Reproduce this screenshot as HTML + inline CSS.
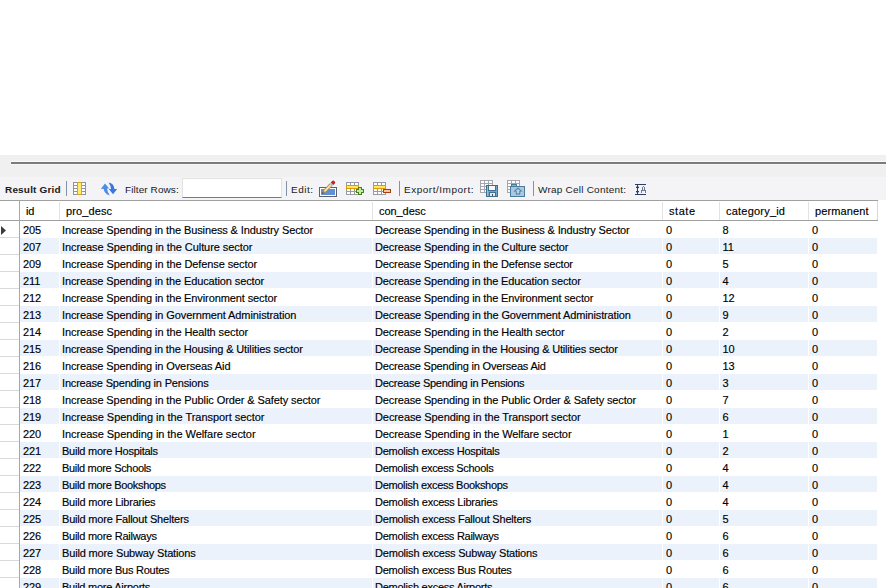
<!DOCTYPE html>
<html><head><meta charset="utf-8"><style>
*{margin:0;padding:0;box-sizing:border-box}
html,body{width:886px;height:588px;overflow:hidden;background:#fff}
body{position:relative;font-family:"Liberation Sans",sans-serif;color:#000}
.a{position:absolute}
.t{position:absolute;white-space:nowrap;font-size:11px;line-height:13px;-webkit-text-stroke:0.15px #000}
.tb{position:absolute;white-space:nowrap;font-size:10px;line-height:12px;color:#1a1a1a;transform:scaleY(0.88);transform-origin:0 10px}
.hl{position:absolute;background:#ebf2fc;height:16px}
.gl{position:absolute;left:0;width:19px;height:1px;background:#d9d9d9}
.sep{position:absolute;width:1px;height:15px;top:181px;background:#8393a6}
svg{position:absolute;shape-rendering:crispEdges}
</style></head><body>

<div class="a" style="left:0;top:155px;width:886px;height:22px;background:#f0f0f0"></div>
<div class="a" style="left:11px;top:161px;width:875px;height:1px;background:#f9f9f9"></div>
<div class="a" style="left:11px;top:162px;width:875px;height:2px;background:#7b7b7b"></div>
<div class="a" style="left:11px;top:164px;width:875px;height:1px;background:#f7f7f7"></div>
<div class="a" style="left:0;top:177px;width:886px;height:23px;background:#f4f4f6"></div>
<div class="a" style="left:0;top:200px;width:878px;height:1px;background:#a0a0a0"></div>
<div class="a" style="left:0;top:201px;width:878px;height:19px;background:#fff"></div>
<div class="a" style="left:0;top:220px;width:878px;height:1px;background:#a0a0a0"></div>
<div class="a" style="left:59px;top:202px;width:1px;height:18px;background:#e3e3e3"></div>
<div class="a" style="left:372px;top:202px;width:1px;height:18px;background:#e3e3e3"></div>
<div class="a" style="left:662px;top:202px;width:1px;height:18px;background:#e3e3e3"></div>
<div class="a" style="left:719px;top:202px;width:1px;height:18px;background:#e3e3e3"></div>
<div class="a" style="left:808px;top:202px;width:1px;height:18px;background:#e3e3e3"></div>
<div class="a" style="left:877px;top:201px;width:1px;height:19px;background:#d8d8d8"></div>
<div class="a" style="left:19px;top:200px;width:1px;height:388px;background:#a8a8a8"></div>
<div class="t" style="left:26px;top:205px;letter-spacing:-0.13px">id</div>
<div class="t" style="left:66px;top:205px;letter-spacing:0.113px">pro_desc</div>
<div class="t" style="left:379px;top:205px;letter-spacing:-0.066px">con_desc</div>
<div class="t" style="left:669px;top:205px;letter-spacing:0.545px">state</div>
<div class="t" style="left:726px;top:205px;letter-spacing:0.212px">category_id</div>
<div class="t" style="left:815px;top:205px;letter-spacing:0.107px">permanent</div>
<div class="gl" style="top:237px"></div>
<div class="t" style="left:23px;top:224px;letter-spacing:-0.13px">205</div>
<div class="t" style="left:62px;top:224px;letter-spacing:-0.113px">Increase Spending in the Business &amp; Industry Sector</div>
<div class="t" style="left:375px;top:224px;letter-spacing:-0.14px">Decrease Spending in the Business &amp; Industry Sector</div>
<div class="t" style="left:666px;top:224px;letter-spacing:-0.13px">0</div>
<div class="t" style="left:722.5px;top:224px;letter-spacing:-0.13px">8</div>
<div class="t" style="left:812px;top:224px;letter-spacing:-0.13px">0</div>
<div class="hl" style="left:20px;top:238px;width:39px"></div>
<div class="hl" style="left:60px;top:238px;width:312px"></div>
<div class="hl" style="left:373px;top:238px;width:289px"></div>
<div class="hl" style="left:663px;top:238px;width:56px"></div>
<div class="hl" style="left:720px;top:238px;width:88px"></div>
<div class="hl" style="left:809px;top:238px;width:68px"></div>
<div class="gl" style="top:254px"></div>
<div class="t" style="left:23px;top:241px;letter-spacing:-0.13px">207</div>
<div class="t" style="left:62px;top:241px;letter-spacing:-0.076px">Increase Spending in the Culture sector</div>
<div class="t" style="left:375px;top:241px;letter-spacing:-0.121px">Decrease Spending in the Culture sector</div>
<div class="t" style="left:666px;top:241px;letter-spacing:-0.13px">0</div>
<div class="t" style="left:722.5px;top:241px;letter-spacing:-0.13px">11</div>
<div class="t" style="left:812px;top:241px;letter-spacing:-0.13px">0</div>
<div class="gl" style="top:271px"></div>
<div class="t" style="left:23px;top:258px;letter-spacing:-0.13px">209</div>
<div class="t" style="left:62px;top:258px;letter-spacing:-0.094px">Increase Spending in the Defense sector</div>
<div class="t" style="left:375px;top:258px;letter-spacing:-0.147px">Decrease Spending in the Defense sector</div>
<div class="t" style="left:666px;top:258px;letter-spacing:-0.13px">0</div>
<div class="t" style="left:722.5px;top:258px;letter-spacing:-0.13px">5</div>
<div class="t" style="left:812px;top:258px;letter-spacing:-0.13px">0</div>
<div class="hl" style="left:20px;top:272px;width:39px"></div>
<div class="hl" style="left:60px;top:272px;width:312px"></div>
<div class="hl" style="left:373px;top:272px;width:289px"></div>
<div class="hl" style="left:663px;top:272px;width:56px"></div>
<div class="hl" style="left:720px;top:272px;width:88px"></div>
<div class="hl" style="left:809px;top:272px;width:68px"></div>
<div class="gl" style="top:288px"></div>
<div class="t" style="left:23px;top:275px;letter-spacing:-0.13px">211</div>
<div class="t" style="left:62px;top:275px;letter-spacing:-0.113px">Increase Spending in the Education sector</div>
<div class="t" style="left:375px;top:275px;letter-spacing:-0.144px">Decrease Spending in the Education sector</div>
<div class="t" style="left:666px;top:275px;letter-spacing:-0.13px">0</div>
<div class="t" style="left:722.5px;top:275px;letter-spacing:-0.13px">4</div>
<div class="t" style="left:812px;top:275px;letter-spacing:-0.13px">0</div>
<div class="gl" style="top:305px"></div>
<div class="t" style="left:23px;top:292px;letter-spacing:-0.13px">212</div>
<div class="t" style="left:62px;top:292px;letter-spacing:-0.106px">Increase Spending in the Environment sector</div>
<div class="t" style="left:375px;top:292px;letter-spacing:-0.141px">Decrease Spending in the Environment sector</div>
<div class="t" style="left:666px;top:292px;letter-spacing:-0.13px">0</div>
<div class="t" style="left:722.5px;top:292px;letter-spacing:-0.13px">12</div>
<div class="t" style="left:812px;top:292px;letter-spacing:-0.13px">0</div>
<div class="hl" style="left:20px;top:306px;width:39px"></div>
<div class="hl" style="left:60px;top:306px;width:312px"></div>
<div class="hl" style="left:373px;top:306px;width:289px"></div>
<div class="hl" style="left:663px;top:306px;width:56px"></div>
<div class="hl" style="left:720px;top:306px;width:88px"></div>
<div class="hl" style="left:809px;top:306px;width:68px"></div>
<div class="gl" style="top:322px"></div>
<div class="t" style="left:23px;top:309px;letter-spacing:-0.13px">213</div>
<div class="t" style="left:62px;top:309px;letter-spacing:-0.102px">Increase Spending in Government Administration</div>
<div class="t" style="left:375px;top:309px;letter-spacing:-0.13px">Decrease Spending in the Government Administration</div>
<div class="t" style="left:666px;top:309px;letter-spacing:-0.13px">0</div>
<div class="t" style="left:722.5px;top:309px;letter-spacing:-0.13px">9</div>
<div class="t" style="left:812px;top:309px;letter-spacing:-0.13px">0</div>
<div class="gl" style="top:339px"></div>
<div class="t" style="left:23px;top:326px;letter-spacing:-0.13px">214</div>
<div class="t" style="left:62px;top:326px;letter-spacing:-0.094px">Increase Spending in the Health sector</div>
<div class="t" style="left:375px;top:326px;letter-spacing:-0.131px">Decrease Spending in the Health sector</div>
<div class="t" style="left:666px;top:326px;letter-spacing:-0.13px">0</div>
<div class="t" style="left:722.5px;top:326px;letter-spacing:-0.13px">2</div>
<div class="t" style="left:812px;top:326px;letter-spacing:-0.13px">0</div>
<div class="hl" style="left:20px;top:340px;width:39px"></div>
<div class="hl" style="left:60px;top:340px;width:312px"></div>
<div class="hl" style="left:373px;top:340px;width:289px"></div>
<div class="hl" style="left:663px;top:340px;width:56px"></div>
<div class="hl" style="left:720px;top:340px;width:88px"></div>
<div class="hl" style="left:809px;top:340px;width:68px"></div>
<div class="gl" style="top:356px"></div>
<div class="t" style="left:23px;top:343px;letter-spacing:-0.13px">215</div>
<div class="t" style="left:62px;top:343px;letter-spacing:-0.122px">Increase Spending in the Housing &amp; Utilities sector</div>
<div class="t" style="left:375px;top:343px;letter-spacing:-0.179px">Decrease Spending in the Housing &amp; Utilities sector</div>
<div class="t" style="left:666px;top:343px;letter-spacing:-0.13px">0</div>
<div class="t" style="left:722.5px;top:343px;letter-spacing:-0.13px">10</div>
<div class="t" style="left:812px;top:343px;letter-spacing:-0.13px">0</div>
<div class="gl" style="top:373px"></div>
<div class="t" style="left:23px;top:360px;letter-spacing:-0.13px">216</div>
<div class="t" style="left:62px;top:360px;letter-spacing:-0.102px">Increase Spending in Overseas Aid</div>
<div class="t" style="left:375px;top:360px;letter-spacing:-0.179px">Decrease Spending in Overseas Aid</div>
<div class="t" style="left:666px;top:360px;letter-spacing:-0.13px">0</div>
<div class="t" style="left:722.5px;top:360px;letter-spacing:-0.13px">13</div>
<div class="t" style="left:812px;top:360px;letter-spacing:-0.13px">0</div>
<div class="hl" style="left:20px;top:374px;width:39px"></div>
<div class="hl" style="left:60px;top:374px;width:312px"></div>
<div class="hl" style="left:373px;top:374px;width:289px"></div>
<div class="hl" style="left:663px;top:374px;width:56px"></div>
<div class="hl" style="left:720px;top:374px;width:88px"></div>
<div class="hl" style="left:809px;top:374px;width:68px"></div>
<div class="gl" style="top:390px"></div>
<div class="t" style="left:23px;top:377px;letter-spacing:-0.13px">217</div>
<div class="t" style="left:62px;top:377px;letter-spacing:-0.178px">Increase Spending in Pensions</div>
<div class="t" style="left:375px;top:377px;letter-spacing:-0.248px">Decrease Spending in Pensions</div>
<div class="t" style="left:666px;top:377px;letter-spacing:-0.13px">0</div>
<div class="t" style="left:722.5px;top:377px;letter-spacing:-0.13px">3</div>
<div class="t" style="left:812px;top:377px;letter-spacing:-0.13px">0</div>
<div class="gl" style="top:407px"></div>
<div class="t" style="left:23px;top:394px;letter-spacing:-0.13px">218</div>
<div class="t" style="left:62px;top:394px;letter-spacing:-0.097px">Increase Spending in the Public Order &amp; Safety sector</div>
<div class="t" style="left:375px;top:394px;letter-spacing:-0.139px">Decrease Spending in the Public Order &amp; Safety sector</div>
<div class="t" style="left:666px;top:394px;letter-spacing:-0.13px">0</div>
<div class="t" style="left:722.5px;top:394px;letter-spacing:-0.13px">7</div>
<div class="t" style="left:812px;top:394px;letter-spacing:-0.13px">0</div>
<div class="hl" style="left:20px;top:408px;width:39px"></div>
<div class="hl" style="left:60px;top:408px;width:312px"></div>
<div class="hl" style="left:373px;top:408px;width:289px"></div>
<div class="hl" style="left:663px;top:408px;width:56px"></div>
<div class="hl" style="left:720px;top:408px;width:88px"></div>
<div class="hl" style="left:809px;top:408px;width:68px"></div>
<div class="gl" style="top:424px"></div>
<div class="t" style="left:23px;top:411px;letter-spacing:-0.13px">219</div>
<div class="t" style="left:62px;top:411px;letter-spacing:-0.043px">Increase Spending in the Transport sector</div>
<div class="t" style="left:375px;top:411px;letter-spacing:-0.088px">Decrease Spending in the Transport sector</div>
<div class="t" style="left:666px;top:411px;letter-spacing:-0.13px">0</div>
<div class="t" style="left:722.5px;top:411px;letter-spacing:-0.13px">6</div>
<div class="t" style="left:812px;top:411px;letter-spacing:-0.13px">0</div>
<div class="gl" style="top:441px"></div>
<div class="t" style="left:23px;top:428px;letter-spacing:-0.13px">220</div>
<div class="t" style="left:62px;top:428px;letter-spacing:-0.05px">Increase Spending in the Welfare sector</div>
<div class="t" style="left:375px;top:428px;letter-spacing:-0.1px">Decrease Spending in the Welfare sector</div>
<div class="t" style="left:666px;top:428px;letter-spacing:-0.13px">0</div>
<div class="t" style="left:722.5px;top:428px;letter-spacing:-0.13px">1</div>
<div class="t" style="left:812px;top:428px;letter-spacing:-0.13px">0</div>
<div class="hl" style="left:20px;top:442px;width:39px"></div>
<div class="hl" style="left:60px;top:442px;width:312px"></div>
<div class="hl" style="left:373px;top:442px;width:289px"></div>
<div class="hl" style="left:663px;top:442px;width:56px"></div>
<div class="hl" style="left:720px;top:442px;width:88px"></div>
<div class="hl" style="left:809px;top:442px;width:68px"></div>
<div class="gl" style="top:458px"></div>
<div class="t" style="left:23px;top:445px;letter-spacing:-0.13px">221</div>
<div class="t" style="left:62px;top:445px;letter-spacing:-0.255px">Build more Hospitals</div>
<div class="t" style="left:375px;top:445px;letter-spacing:-0.279px">Demolish excess Hospitals</div>
<div class="t" style="left:666px;top:445px;letter-spacing:-0.13px">0</div>
<div class="t" style="left:722.5px;top:445px;letter-spacing:-0.13px">2</div>
<div class="t" style="left:812px;top:445px;letter-spacing:-0.13px">0</div>
<div class="gl" style="top:475px"></div>
<div class="t" style="left:23px;top:462px;letter-spacing:-0.13px">222</div>
<div class="t" style="left:62px;top:462px;letter-spacing:-0.318px">Build more Schools</div>
<div class="t" style="left:375px;top:462px;letter-spacing:-0.304px">Demolish excess Schools</div>
<div class="t" style="left:666px;top:462px;letter-spacing:-0.13px">0</div>
<div class="t" style="left:722.5px;top:462px;letter-spacing:-0.13px">4</div>
<div class="t" style="left:812px;top:462px;letter-spacing:-0.13px">0</div>
<div class="hl" style="left:20px;top:476px;width:39px"></div>
<div class="hl" style="left:60px;top:476px;width:312px"></div>
<div class="hl" style="left:373px;top:476px;width:289px"></div>
<div class="hl" style="left:663px;top:476px;width:56px"></div>
<div class="hl" style="left:720px;top:476px;width:88px"></div>
<div class="hl" style="left:809px;top:476px;width:68px"></div>
<div class="gl" style="top:492px"></div>
<div class="t" style="left:23px;top:479px;letter-spacing:-0.13px">223</div>
<div class="t" style="left:62px;top:479px;letter-spacing:-0.315px">Build more Bookshops</div>
<div class="t" style="left:375px;top:479px;letter-spacing:-0.318px">Demolish excess Bookshops</div>
<div class="t" style="left:666px;top:479px;letter-spacing:-0.13px">0</div>
<div class="t" style="left:722.5px;top:479px;letter-spacing:-0.13px">4</div>
<div class="t" style="left:812px;top:479px;letter-spacing:-0.13px">0</div>
<div class="gl" style="top:509px"></div>
<div class="t" style="left:23px;top:496px;letter-spacing:-0.13px">224</div>
<div class="t" style="left:62px;top:496px;letter-spacing:-0.221px">Build more Libraries</div>
<div class="t" style="left:375px;top:496px;letter-spacing:-0.239px">Demolish excess Libraries</div>
<div class="t" style="left:666px;top:496px;letter-spacing:-0.13px">0</div>
<div class="t" style="left:722.5px;top:496px;letter-spacing:-0.13px">4</div>
<div class="t" style="left:812px;top:496px;letter-spacing:-0.13px">0</div>
<div class="hl" style="left:20px;top:510px;width:39px"></div>
<div class="hl" style="left:60px;top:510px;width:312px"></div>
<div class="hl" style="left:373px;top:510px;width:289px"></div>
<div class="hl" style="left:663px;top:510px;width:56px"></div>
<div class="hl" style="left:720px;top:510px;width:88px"></div>
<div class="hl" style="left:809px;top:510px;width:68px"></div>
<div class="gl" style="top:526px"></div>
<div class="t" style="left:23px;top:513px;letter-spacing:-0.13px">225</div>
<div class="t" style="left:62px;top:513px;letter-spacing:-0.199px">Build more Fallout Shelters</div>
<div class="t" style="left:375px;top:513px;letter-spacing:-0.204px">Demolish excess Fallout Shelters</div>
<div class="t" style="left:666px;top:513px;letter-spacing:-0.13px">0</div>
<div class="t" style="left:722.5px;top:513px;letter-spacing:-0.13px">5</div>
<div class="t" style="left:812px;top:513px;letter-spacing:-0.13px">0</div>
<div class="gl" style="top:543px"></div>
<div class="t" style="left:23px;top:530px;letter-spacing:-0.13px">226</div>
<div class="t" style="left:62px;top:530px;letter-spacing:-0.26px">Build more Railways</div>
<div class="t" style="left:375px;top:530px;letter-spacing:-0.27px">Demolish excess Railways</div>
<div class="t" style="left:666px;top:530px;letter-spacing:-0.13px">0</div>
<div class="t" style="left:722.5px;top:530px;letter-spacing:-0.13px">6</div>
<div class="t" style="left:812px;top:530px;letter-spacing:-0.13px">0</div>
<div class="hl" style="left:20px;top:544px;width:39px"></div>
<div class="hl" style="left:60px;top:544px;width:312px"></div>
<div class="hl" style="left:373px;top:544px;width:289px"></div>
<div class="hl" style="left:663px;top:544px;width:56px"></div>
<div class="hl" style="left:720px;top:544px;width:88px"></div>
<div class="hl" style="left:809px;top:544px;width:68px"></div>
<div class="gl" style="top:560px"></div>
<div class="t" style="left:23px;top:547px;letter-spacing:-0.13px">227</div>
<div class="t" style="left:62px;top:547px;letter-spacing:-0.153px">Build more Subway Stations</div>
<div class="t" style="left:375px;top:547px;letter-spacing:-0.19px">Demolish excess Subway Stations</div>
<div class="t" style="left:666px;top:547px;letter-spacing:-0.13px">0</div>
<div class="t" style="left:722.5px;top:547px;letter-spacing:-0.13px">6</div>
<div class="t" style="left:812px;top:547px;letter-spacing:-0.13px">0</div>
<div class="gl" style="top:577px"></div>
<div class="t" style="left:23px;top:564px;letter-spacing:-0.13px">228</div>
<div class="t" style="left:62px;top:564px;letter-spacing:-0.247px">Build more Bus Routes</div>
<div class="t" style="left:375px;top:564px;letter-spacing:-0.248px">Demolish excess Bus Routes</div>
<div class="t" style="left:666px;top:564px;letter-spacing:-0.13px">0</div>
<div class="t" style="left:722.5px;top:564px;letter-spacing:-0.13px">6</div>
<div class="t" style="left:812px;top:564px;letter-spacing:-0.13px">0</div>
<div class="hl" style="left:20px;top:578px;width:39px"></div>
<div class="hl" style="left:60px;top:578px;width:312px"></div>
<div class="hl" style="left:373px;top:578px;width:289px"></div>
<div class="hl" style="left:663px;top:578px;width:56px"></div>
<div class="hl" style="left:720px;top:578px;width:88px"></div>
<div class="hl" style="left:809px;top:578px;width:68px"></div>
<div class="gl" style="top:594px"></div>
<div class="t" style="left:23px;top:581px;letter-spacing:-0.13px">229</div>
<div class="t" style="left:62px;top:581px;letter-spacing:-0.254px">Build more Airports</div>
<div class="t" style="left:375px;top:581px;letter-spacing:-0.259px">Demolish excess Airports</div>
<div class="t" style="left:666px;top:581px;letter-spacing:-0.13px">0</div>
<div class="t" style="left:722.5px;top:581px;letter-spacing:-0.13px">6</div>
<div class="t" style="left:812px;top:581px;letter-spacing:-0.13px">0</div>
<svg style="left:0;top:225px" width="8" height="12" viewBox="0 0 8 12"><path d="M1,1 L6,5.5 L1,10 Z" fill="#3c3c3c" style="shape-rendering:auto"/></svg>
<div class="tb" style="left:5px;top:184px;font-weight:bold;letter-spacing:0.17px">Result Grid</div>
<div class="tb" style="left:125px;top:184px;letter-spacing:0.082px">Filter Rows:</div>
<div class="tb" style="left:291px;top:184px;letter-spacing:0.476px">Edit:</div>
<div class="tb" style="left:404px;top:184px;letter-spacing:0.513px">Export/Import:</div>
<div class="tb" style="left:538px;top:184px;letter-spacing:0.218px">Wrap Cell Content:</div>
<div class="sep" style="left:66px"></div>
<div class="a" style="left:182px;top:178px;width:100px;height:20px;background:#fff;border:1px solid #e2e2e2;border-bottom:1px solid #7a7a7a"></div>
<div class="sep" style="left:286px"></div>
<div class="sep" style="left:399px"></div>
<div class="sep" style="left:533px"></div>
<!-- column icon -->
<svg style="left:73px;top:182px" width="13" height="13" viewBox="0 0 13 13">
<rect x="0" y="0" width="13" height="13" fill="#8f949c"/>
<rect x="1" y="1" width="3" height="2" fill="#fff"/><rect x="1" y="4" width="3" height="2" fill="#fff"/><rect x="1" y="7" width="3" height="2" fill="#fff"/><rect x="1" y="10" width="3" height="2" fill="#fff"/>
<rect x="9" y="1" width="3" height="2" fill="#fff"/><rect x="9" y="4" width="3" height="2" fill="#fff"/><rect x="9" y="7" width="3" height="2" fill="#fff"/><rect x="9" y="10" width="3" height="2" fill="#fff"/>
<rect x="4" y="0" width="5" height="13" fill="#e2a200"/><rect x="5" y="1" width="3" height="11" fill="#ffec6e"/>
</svg>
<!-- refresh -->
<svg style="left:98px;top:179px;shape-rendering:auto" width="22" height="20" viewBox="0 0 22 20">
<path d="M2.8,10 L7,4.6 L11.2,9.6 L9,9.6 Q9.4,13 11.8,16.4 Q6.2,15 5.6,9.8 Z" fill="#4a8ee8"/>
<path d="M10.6,3.6 Q16,4.4 16.4,10 L19.2,10 L15,15.2 L10.8,10 L13,10 Q12.8,6.8 10.6,3.6 Z" fill="#3a78de"/>
</svg>
<!-- pencil edit -->
<svg style="left:318px;top:179px" width="21" height="19" viewBox="0 0 21 19">
<rect x="1" y="8" width="18" height="10" fill="#5a606c"/>
<rect x="2" y="9" width="16" height="8" fill="#fff"/>
<rect x="3" y="10" width="14" height="6" fill="#5d90d8"/>
<g style="shape-rendering:auto" transform="translate(4.2,14.6) rotate(-45)">
<path d="M0,0 L3,-1.8 L12.4,-1.8 L12.4,1.8 L3,1.8 Z" fill="#b4874a"/>
<path d="M3.2,-0.9 L12.4,-0.9 L12.4,0.9 L3.2,0.9 Z" fill="#f8eaa8"/>
<path d="M0,0 L1.3,-0.8 L1.3,0.8 Z" fill="#1a2040"/>
<rect x="12.4" y="-1.8" width="1.6" height="3.6" fill="#9ccad6"/>
<path d="M14,-1.8 L16.2,-1.8 Q17.4,-1.8 17.4,0 Q17.4,1.8 16.2,1.8 L14,1.8 Z" fill="#cc2222"/>
</g>
</svg>
<!-- add row -->
<svg style="left:346px;top:182px" width="19" height="14" viewBox="0 0 19 14">
<rect x="0" y="0" width="13" height="13" fill="#979ca4"/>
<rect x="1" y="1" width="3" height="2" fill="#fff"/><rect x="5" y="1" width="3" height="2" fill="#fff"/><rect x="9" y="1" width="3" height="2" fill="#fff"/>
<rect x="1" y="7" width="3" height="2" fill="#fff"/><rect x="5" y="7" width="3" height="2" fill="#fff"/><rect x="9" y="7" width="3" height="2" fill="#fff"/>
<rect x="1" y="10" width="3" height="2" fill="#fff"/><rect x="5" y="10" width="3" height="2" fill="#fff"/><rect x="9" y="10" width="3" height="2" fill="#fff"/>
<rect x="0" y="3" width="13" height="4" fill="#e09a00"/><rect x="1" y="4" width="11" height="2" fill="#ffe860"/>
<path d="M12,5 h4 v2 h2 v4 h-2 v2 h-4 v-2 h-2 v-4 h2 z" fill="#4d7d1c"/>
<path d="M13,6 h2 v2 h2 v2 h-2 v2 h-2 v-2 h-2 v-2 h2 z" fill="#b9f0a2"/>
</svg>
<!-- delete row -->
<svg style="left:373px;top:182px" width="19" height="14" viewBox="0 0 19 14">
<rect x="0" y="0" width="13" height="13" fill="#979ca4"/>
<rect x="1" y="1" width="3" height="2" fill="#fff"/><rect x="5" y="1" width="3" height="2" fill="#fff"/><rect x="9" y="1" width="3" height="2" fill="#fff"/>
<rect x="1" y="7" width="3" height="2" fill="#fff"/><rect x="5" y="7" width="3" height="2" fill="#fff"/><rect x="9" y="7" width="3" height="2" fill="#fff"/>
<rect x="1" y="10" width="3" height="2" fill="#fff"/><rect x="5" y="10" width="3" height="2" fill="#fff"/><rect x="9" y="10" width="3" height="2" fill="#fff"/>
<rect x="0" y="3" width="13" height="4" fill="#e09a00"/><rect x="1" y="4" width="11" height="2" fill="#ffe860"/>
<rect x="10" y="7" width="8" height="4" fill="#a83c12"/><rect x="11" y="8" width="6" height="2" fill="#f8c59a"/>
</svg>
<!-- export -->
<svg style="left:480px;top:180px" width="19" height="18" viewBox="0 0 19 18">
<rect x="0" y="0" width="13" height="13" fill="#a3a7ad"/>
<rect x="1" y="1" width="3" height="2" fill="#fff"/><rect x="5" y="1" width="3" height="2" fill="#fff"/><rect x="9" y="1" width="3" height="2" fill="#fff"/>
<rect x="1" y="4" width="3" height="2" fill="#fff"/><rect x="5" y="4" width="3" height="2" fill="#fff"/><rect x="9" y="4" width="3" height="2" fill="#fff"/>
<rect x="1" y="7" width="3" height="2" fill="#fff"/><rect x="5" y="7" width="3" height="2" fill="#fff"/><rect x="9" y="7" width="3" height="2" fill="#fff"/>
<rect x="1" y="10" width="3" height="2" fill="#fff"/><rect x="5" y="10" width="3" height="2" fill="#fff"/><rect x="9" y="10" width="3" height="2" fill="#fff"/>
<rect x="6" y="5" width="12" height="12" fill="#3f7090"/>
<rect x="7" y="6" width="10" height="10" fill="#78a3c1"/>
<rect x="7" y="6" width="1" height="10" fill="#9cbdd4"/>
<rect x="8" y="5" width="8" height="6" fill="#3f7090"/><rect x="9" y="6" width="6" height="4" fill="#f6f8fa"/>
<rect x="9" y="12" width="7" height="5" fill="#3f7090"/><rect x="10" y="13" width="5" height="3" fill="#e6eaee"/><rect x="12" y="14" width="1" height="2" fill="#4a4a4a"/>
</svg>
<!-- import -->
<svg style="left:507px;top:180px" width="19" height="18" viewBox="0 0 19 18">
<rect x="0" y="0" width="13" height="13" fill="#a3a7ad"/>
<rect x="1" y="1" width="3" height="2" fill="#fff"/><rect x="5" y="1" width="3" height="2" fill="#fff"/><rect x="9" y="1" width="3" height="2" fill="#fff"/>
<rect x="1" y="4" width="3" height="2" fill="#fff"/><rect x="5" y="4" width="3" height="2" fill="#fff"/><rect x="9" y="4" width="3" height="2" fill="#fff"/>
<rect x="1" y="7" width="3" height="2" fill="#fff"/><rect x="5" y="7" width="3" height="2" fill="#fff"/><rect x="9" y="7" width="3" height="2" fill="#fff"/>
<rect x="1" y="10" width="3" height="2" fill="#fff"/><rect x="5" y="10" width="3" height="2" fill="#fff"/><rect x="9" y="10" width="3" height="2" fill="#fff"/>
<rect x="4" y="4" width="6" height="3" fill="#4b7b9c"/><rect x="5" y="5" width="4" height="2" fill="#8fb4d0"/>
<rect x="3" y="6" width="15" height="11" fill="#4b7b9c"/>
<rect x="4" y="7" width="13" height="9" fill="#a9c9e2"/>
<path d="M11,7.5 L15.6,11.5 L13.2,11.5 L13.2,14.6 L8.8,14.6 L8.8,11.5 L6.4,11.5 Z" fill="#4b7b9c" style="shape-rendering:auto"/>
<path d="M11,9 L13.6,10.7 L12.3,10.7 L12.3,13.6 L9.7,13.6 L9.7,10.7 L8.4,10.7 Z" fill="#b8d4ea" style="shape-rendering:auto"/>
</svg>
<!-- wrap -->
<svg style="left:635px;top:183px" width="12" height="13" viewBox="0 0 12 13">
<rect x="0" y="1" width="11" height="1" fill="#2b3d66"/>
<rect x="0" y="11" width="11" height="1" fill="#2b3d66"/>
<rect x="2" y="2" width="1" height="9" fill="#2b3d66"/>
<rect x="1" y="3" width="1" height="1" fill="#b3bccb"/><rect x="3" y="3" width="1" height="1" fill="#b3bccb"/>
<rect x="1" y="4" width="3" height="1" fill="#2b3d66"/>
<rect x="1" y="8" width="3" height="1" fill="#2b3d66"/>
<rect x="1" y="9" width="1" height="1" fill="#b3bccb"/><rect x="3" y="9" width="1" height="1" fill="#b3bccb"/>
<rect x="8" y="3" width="1" height="1" fill="#7d8aa0"/>
<rect x="7" y="4" width="1" height="3" fill="#6b7a92"/><rect x="9" y="4" width="1" height="3" fill="#6b7a92"/>
<rect x="6" y="7" width="5" height="1" fill="#6b7a92"/>
<rect x="6" y="8" width="1" height="2" fill="#6b7a92"/><rect x="10" y="8" width="1" height="2" fill="#6b7a92"/>
</svg>

</body></html>
